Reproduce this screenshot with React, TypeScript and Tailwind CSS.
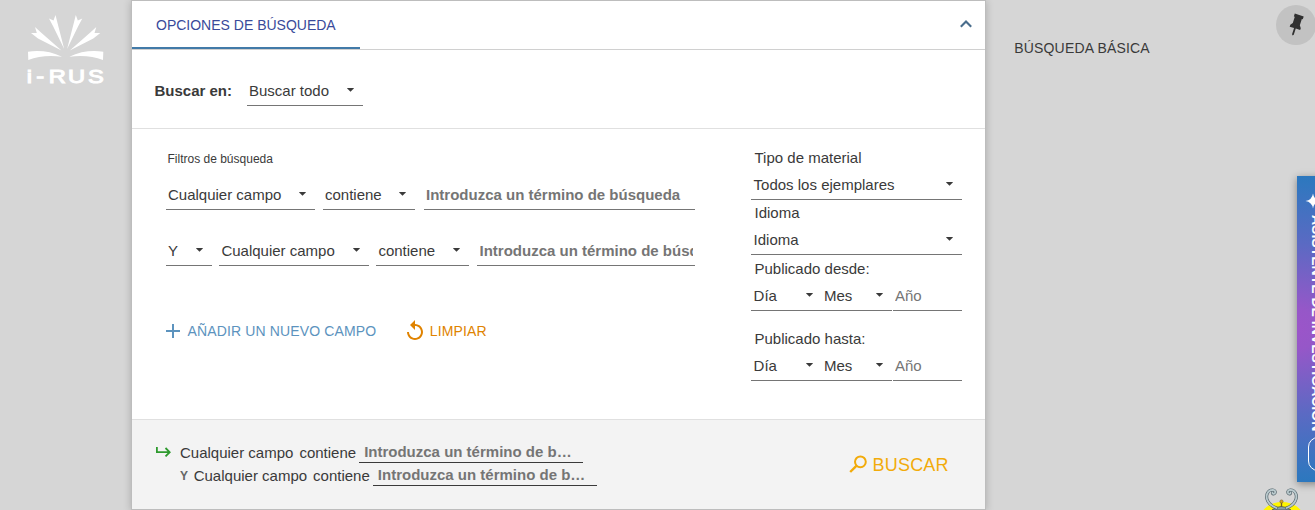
import React from "react";

function Caret() {
  return (
    <svg className="h-1 w-[7px] shrink-0" viewBox="0 0 7 4" fill="#3a3a3a">
      <path d="M0.2 0H6.8V0.6L3.5 3.8L0.2 0.6Z" />
    </svg>
  );
}

function Select({ label, className }: { label: string; className: string }) {
  return (
    <div className={`flex h-[30px] shrink-0 justify-between border-b border-[#757575] pl-0.5 ${className}`}>
      <span className="leading-[30px]">{label}</span>
      <span className="flex pt-[11.5px]">
        <Caret />
      </span>
    </div>
  );
}

function Field({ text, className }: { text: string; className: string }) {
  return (
    <div className={`h-[30px] shrink-0 border-b border-[#757575] px-0.5 text-[#757575] ${className}`}>
      <div className="overflow-hidden whitespace-nowrap leading-[30px]">{text}</div>
    </div>
  );
}

function Logo() {
  return (
    <svg className="h-[74px] w-[80px]" viewBox="25 13 80 74" fill="#fff">
      <g id="half">
        <path d="M35 27L41 32.5L61.5 50.5L38 38.5L31 33L36.8 33Z" />
        <path d="M49 18.5L53.5 20.5L55.5 15L57.5 23L64.2 49L53 26Z" />
        <path d="M28 51.7C38 50 51 51 62 56.7C50 55 38 56 28.3 60Z" />
      </g>
      <use href="#half" transform="translate(131.3 0) scale(-1 1)" />
      <g
        transform="translate(0 83.4) scale(1.28 1)"
        fontSize="18.5"
        fontFamily="Liberation Sans, sans-serif"
        stroke="#fff"
        strokeWidth="1"
      >
        <text x="20.9 28.3 38 53.2 68.8">i-RUS</text>
      </g>
    </svg>
  );
}

function PublishedDate({ label }: { label: string }) {
  return (
    <div>
      <div className="h-[26px] pl-[3.5px] leading-[28px]">{label}</div>
      <div className="flex">
        <Select label="Día" className="w-[71px] pl-[2.6px] pr-[9px]" />
        <Select label="Mes" className="w-[70px] pr-[9px]" />
        <Field text="Año" className="ml-px w-[69px]" />
      </div>
    </div>
  );
}

function SummaryTerm() {
  return (
    <>
      <span>Cualquier campo</span>
      <span className="ml-[6px]">contiene</span>
      <span className="ml-[3px] h-[22px] w-[224px] border-b border-[#3a3a3a] pl-[5px] font-bold leading-[21px] text-[#757575]">
        Introduzca un término de b…
      </span>
    </>
  );
}

function SearchPanel() {
  return (
    <main className="flex h-[510px] w-[855px] shrink-0 flex-col border border-[#bdbdbd] bg-white shadow-[0_1px_8px_rgba(0,0,0,0.2)]">
      <header className="flex h-[49px] shrink-0 items-start justify-between border-b border-[#d0d0d0]">
        <div className="h-[48px] w-[228px] border-b-2 border-[#427aa8] pl-6 text-sm leading-[48px] text-[#394a9a]">
          OPCIONES DE BÚSQUEDA
        </div>
        <svg className="mr-[13px] mt-[19px] h-2 w-3" viewBox="0 0 12 8" fill="none" stroke="#4a6d8c" strokeWidth="2.1">
          <path d="M0.8 6.8L6 1.6L11.2 6.8" />
        </svg>
      </header>

      <section className="flex h-[79px] shrink-0 items-start border-b border-[#e0e0e0] pl-[22.5px] pt-[26px]">
        <span className="w-[92.5px] font-bold leading-[30px]">Buscar en:</span>
        <Select label="Buscar todo" className="w-[116px] pr-[9px]" />
      </section>

      <section className="flex h-[291px] shrink-0 border-b border-[#e0e0e0]">
        <div className="w-[619px] pl-[34px] pt-[21px]">
          <div className="h-[30px] pl-[1.5px] text-xs leading-[18px]">Filtros de búsqueda</div>
          <div className="flex h-[56px]">
            <Select label="Cualquier campo" className="w-[149px] pr-[9px]" />
            <Select label="contiene" className="ml-2 w-[92px] pr-[9px]" />
            <Field text="Introduzca un término de búsqueda" className="ml-[9px] w-[271px] font-bold" />
          </div>
          <div className="flex h-[72px]">
            <Select label="Y" className="w-[46px] pr-[9px]" />
            <Select label="Cualquier campo" className="ml-[7px] w-[150px] pl-[2.4px] pr-[9px]" />
            <Select label="contiene" className="ml-[7px] w-[93px] pl-[2.4px] pr-[9px]" />
            <Field text="Introduzca un término de búsqueda" className="ml-2 w-[218px] pl-[2.5px] font-bold" />
          </div>
          <div className="flex h-[46px] items-center text-sm tracking-[0.14px]">
            <svg className="h-[14px] w-[14px]" viewBox="0 0 14 14" fill="#5c93be">
              <path d="M6 0H8V6H14V8H8V14H6V8H0V6H6Z" />
            </svg>
            <span className="ml-[7.5px] w-[219px] text-[#5c93be]">AÑADIR UN NUEVO CAMPO</span>
            <svg className="-mt-0.5 h-5 w-4" viewBox="4 1 16 20" fill="#e08300">
              <path d="M12 5V1L7 6L12 11V7C15.31 7 18 9.69 18 13S15.31 19 12 19S6 16.31 6 13H4C4 17.42 7.58 21 12 21S20 17.42 20 13S16.42 5 12 5Z" />
            </svg>
            <span className="ml-[7.3px] text-[#e08300]">LIMPIAR</span>
          </div>
        </div>

        <div className="flex w-[211px] flex-col pt-4">
          <div className="h-[25px] pl-[3.5px] leading-[26px]">Tipo de material</div>
          <Select label="Todos los ejemplares" className="pl-[2.6px] pr-[9px]" />
          <div className="h-[25px] pl-[3.5px] leading-[26px]">Idioma</div>
          <Select label="Idioma" className="pl-[2.6px] pr-[9px]" />
          <div className="flex flex-col gap-[14px]">
            <PublishedDate label="Publicado desde:" />
            <PublishedDate label="Publicado hasta:" />
          </div>
        </div>
      </section>

      <footer className="flex h-[89px] shrink-0 bg-[#f3f3f3]">
        <div className="flex w-[717px] pl-6 pt-[21px]">
          <svg className="mt-[6px] h-[10px] w-[15px]" viewBox="0 0 15 10" fill="none" stroke="#2e9a2e" strokeWidth="1.8">
            <path d="M0.9 0V5.2H13.5M9.5 1L13.7 5.2L9.5 9.4" />
          </svg>
          <div className="ml-[9px] whitespace-nowrap leading-[24px]">
            <div className="flex h-[23px]">
              <SummaryTerm />
            </div>
            <div className="flex h-[23px]">
              <span className="w-[13.7px] text-[12px] font-bold text-[#666]">Y</span>
              <SummaryTerm />
            </div>
          </div>
        </div>
        <div className="flex h-[89px] items-center text-lg tracking-[0.18px] text-[#f2ab0a]">
          <svg className="-mt-px h-[18px] w-[18px]" viewBox="0 0 18 18" fill="none" stroke="#f2ab0a" strokeWidth="2">
            <circle cx="11.4" cy="6.8" r="5.4" />
            <path d="M7.6 10.6L1.2 17" strokeWidth="2.4" />
          </svg>
          <span className="ml-[5.6px]">BUSCAR</span>
        </div>
      </footer>
    </main>
  );
}

function AssistantTab() {
  return (
    <div className="absolute left-[1297px] top-[176px] h-[306px] w-[48px] bg-[radial-gradient(circle_at_0px_153px,#9b55c9_0px,#9657c8_20px,#5b6ac3_85px,#3177bf_145px,#2878bd_160px)] shadow-[0_2px_8px_rgba(0,0,0,0.4)]">
      <div className="flex flex-col pl-2">
        <svg className="mt-[17px] h-4 w-4" viewBox="0 0 16 16" fill="#fff">
          <path d="M8 0.5Q9 7 15.5 8Q9 9 8 15.5Q7 9 0.5 8Q7 7 8 0.5Z" />
        </svg>
        <div className="ml-[3px] mt-[6px] h-[218px] w-[18px] whitespace-nowrap text-sm font-bold leading-[18px] text-white [writing-mode:vertical-rl]">
          ASISTENTE DE INVESTIGACIÓN
        </div>
        <div className="ml-[3px] mt-1 h-[34px] w-[34px] rounded-[10px] border border-white" />
      </div>
    </div>
  );
}

function Mascot() {
  return (
    <svg className="absolute left-[1260px] top-[486px] h-6 w-[44px]" viewBox="0 0 44 24">
      <ellipse cx="22" cy="31" rx="21" ry="15" fill="#fff500" />
      <path d="M12 24Q21 17 31 24Z" fill="#899fa5" stroke="#39484d" strokeWidth="0.7" />
      <g id="horn" fill="none" strokeLinecap="round">
        <path d="M16.5 22C8 19 5 12 7.5 7C10 2.5 16.5 3.5 15 7C14 8.5 12 8 12.5 6.5" stroke="#53646b" strokeWidth="3.1" />
        <path d="M16.5 22C8 19 5 12 7.5 7C10 2.5 16.5 3.5 15 7C14 8.5 12 8 12.5 6.5" stroke="#b9c9cd" strokeWidth="1.8" />
      </g>
      <use href="#horn" transform="translate(43 0) scale(-1 1)" />
      <path d="M21.5 16V21" stroke="#725b28" strokeWidth="1.3" />
      <circle cx="21.5" cy="15.5" r="1.6" fill="#d5a51e" stroke="#80601a" strokeWidth="0.6" />
    </svg>
  );
}

export default function App() {
  return (
    <div className="relative flex h-[510px] w-[1315px] overflow-hidden bg-[#d6d6d6] font-['Liberation_Sans',Arial,sans-serif] text-[15px] text-[#3a3a3a]">
      <aside className="w-[131px] shrink-0 pl-[25px] pt-[13px]">
        <Logo />
      </aside>
      <SearchPanel />
      <aside className="flex flex-1 justify-between pl-[28.3px]">
        <span className="mt-[38px] text-sm leading-5 tracking-[0.16px]">BÚSQUEDA BÁSICA</span>
        <div className="-mr-px mt-[5px] flex h-10 w-10 items-center justify-center rounded-full bg-[#c2c2c2]">
          <svg className="h-6 w-6" viewBox="0 0 24 24" fill="#303030">
            <path transform="rotate(18 12 12)" d="M7.3 1.5H16.7V4.5H15.7V11L17.5 13.5V15.5H12.9V22L12 23L11.1 22V15.5H6.5V13.5L8.3 11V4.5H7.3Z" />
          </svg>
        </div>
      </aside>
      <AssistantTab />
      <Mascot />
    </div>
  );
}
